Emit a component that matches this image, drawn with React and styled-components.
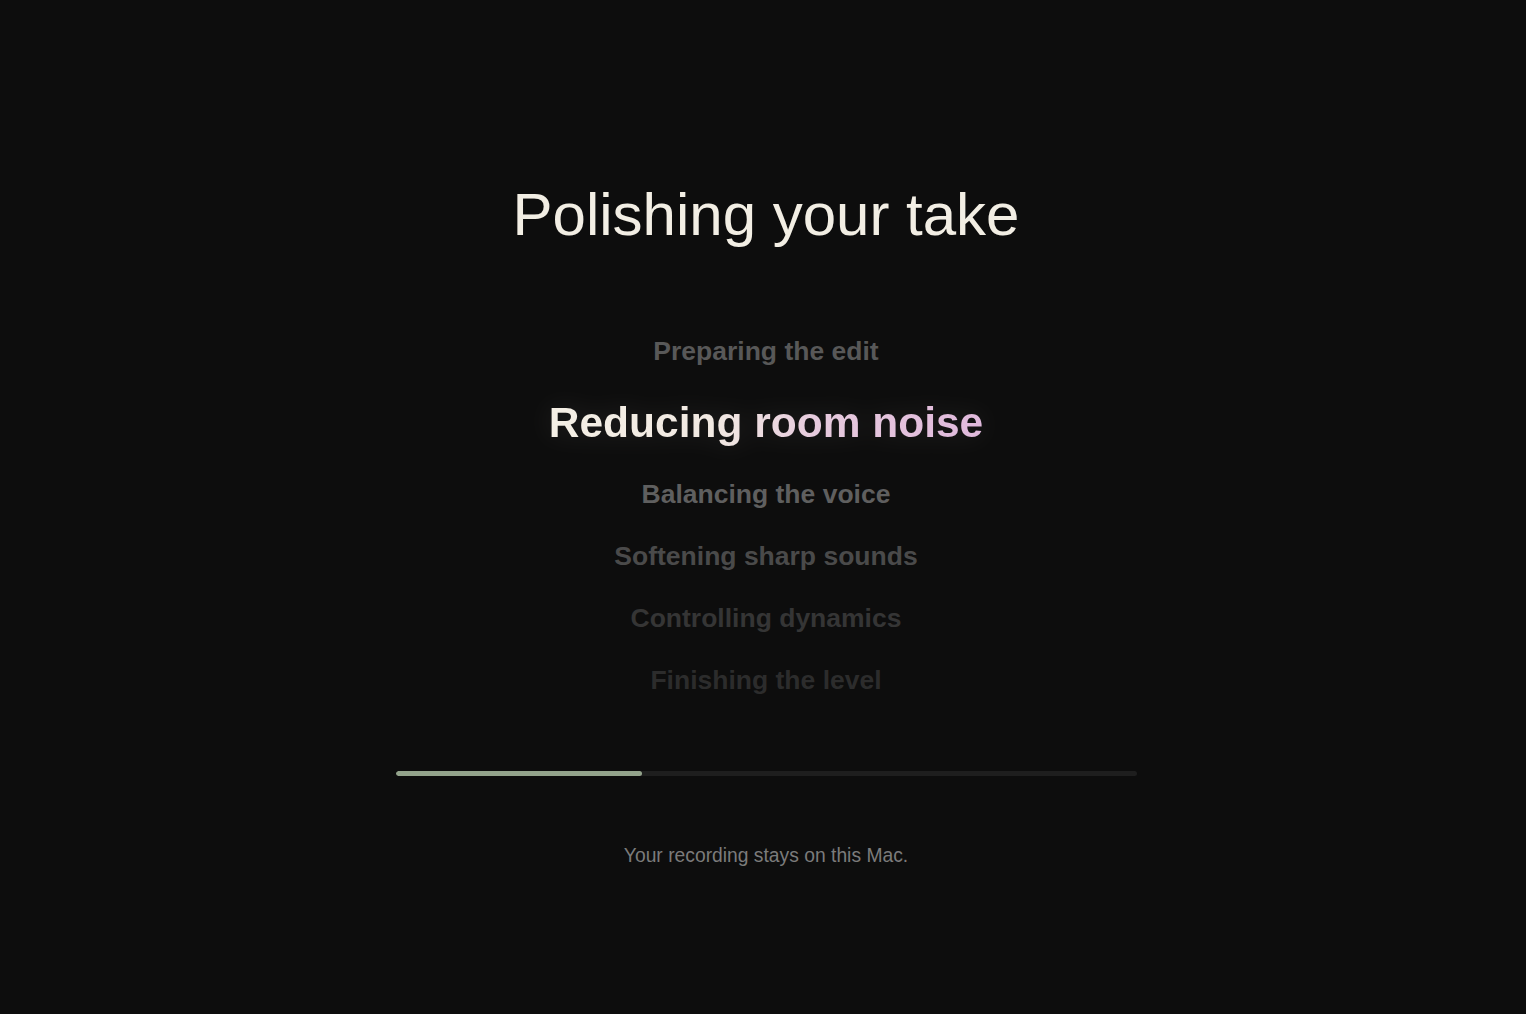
import React from 'react';
import styled, { createGlobalStyle } from 'styled-components';

const GlobalStyle = createGlobalStyle`
    html, body {
        margin: 0;
        padding: 0;
        background-color: #0d0d0d;
    }
    body {
        font-family: "Liberation Sans", Arial, sans-serif;
        -webkit-font-smoothing: antialiased;
    }
`;

const Screen = styled.main`
    min-height: 100vh;
    box-sizing: border-box;
    display: flex;
    flex-direction: column;
    align-items: center;
    padding: 179px 0 0 6px;
`;

const Title = styled.h1`
    margin: 0;
    font-size: 60px;
    line-height: 72px;
    font-weight: 400;
    color: #f2eee4;
`;

const Steps = styled.ul`
    list-style: none;
    margin: 69px 0 0;
    padding: 0;
    display: flex;
    flex-direction: column;
    align-items: center;
`;

const Step = styled.li`
    height: 62px;
    line-height: 62px;
    font-size: 26.5px;
    font-weight: 700;
    color: ${(p) => p.$tone};
    white-space: nowrap;
`;

const ActiveStep = styled.li`
    height: 81px;
    line-height: 81px;
    font-size: 42.5px;
    font-weight: 700;
    white-space: nowrap;
    filter: drop-shadow(0 0 14px rgba(240, 228, 225, 0.12));
`;

const Gradient = styled.span`
    background: linear-gradient(90deg, #f4efe5 0%, #f1e9e2 38%, #e6cadd 62%, #e0b9dc 100%);
    -webkit-background-clip: text;
    background-clip: text;
    color: transparent;
`;

const Track = styled.div`
    width: 741px;
    height: 5px;
    margin-top: 60px;
    border-radius: 3px;
    background-color: #1e1e1e;
    overflow: hidden;
`;

const Fill = styled.div`
    height: 100%;
    border-radius: 3px;
    background-color: #93a38b;
`;

const Note = styled.p`
    margin: 66px 0 0;
    font-size: 19.3px;
    line-height: 27px;
    color: #7b7b7b;
`;

const steps = [
    { label: 'Preparing the edit', tone: '#585858' },
    { label: 'Reducing room noise', active: true },
    { label: 'Balancing the voice', tone: '#5f5f5f' },
    { label: 'Softening sharp sounds', tone: '#4a4a4a' },
    { label: 'Controlling dynamics', tone: '#353535' },
    { label: 'Finishing the level', tone: '#2c2c2c' },
];

const progress = 0.333;

const App = () => {
    return (
        <>
            <GlobalStyle />
            <Screen>
                <Title>Polishing your take</Title>
                <Steps>
                    {steps.map((s) =>
                        s.active ? (
                            <ActiveStep key={s.label}>
                                <Gradient>{s.label}</Gradient>
                            </ActiveStep>
                        ) : (
                            <Step key={s.label} $tone={s.tone}>
                                {s.label}
                            </Step>
                        )
                    )}
                </Steps>
                <Track>
                    <Fill style={{ width: `${progress * 100}%` }} />
                </Track>
                <Note>Your recording stays on this Mac.</Note>
            </Screen>
        </>
    );
};

export default App;
